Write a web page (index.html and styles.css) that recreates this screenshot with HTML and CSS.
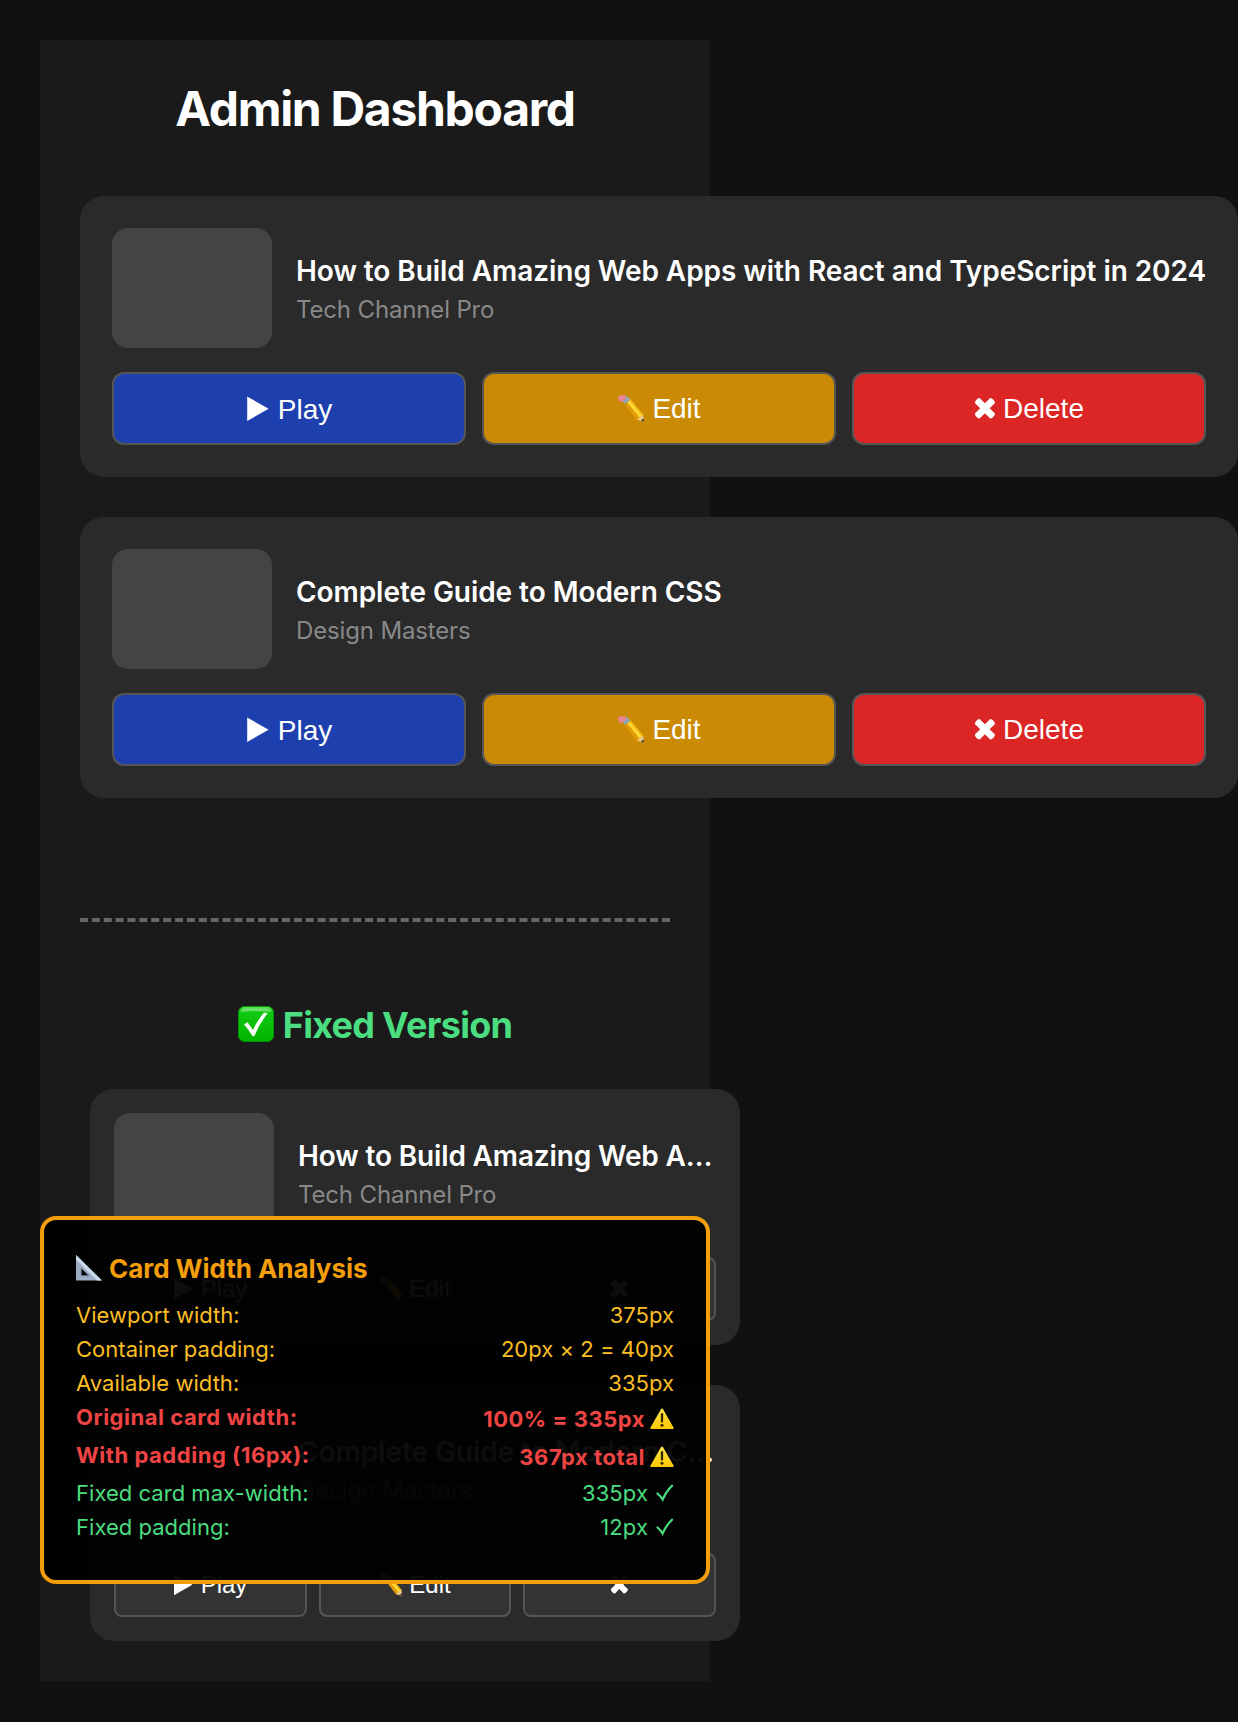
FILE: index.html
```html
<!DOCTYPE html>
<html lang="en">
<head>
<meta charset="utf-8">
<title>Admin Dashboard</title>
<link rel="stylesheet" href="styles.css">
</head>
<body>
<svg class="sprite" aria-hidden="true">
  <defs>
    <linearGradient id="g-check" x1="0" y1="0" x2="0" y2="1"><stop offset="0" stop-color="#5be35b"/><stop offset=".16" stop-color="#12c912"/><stop offset="1" stop-color="#00b400"/></linearGradient>
    <linearGradient id="g-warn" x1="0" y1="0" x2="0" y2="1"><stop offset="0" stop-color="#ffe352"/><stop offset="1" stop-color="#ffc800"/></linearGradient>
    <symbol id="play" viewBox="0 0 24 28"><path d="M1.2 1.5 22.6 13.7 1.2 26z" fill="#fff"/></symbol>
    <symbol id="pencil" viewBox="0 0 28 28">
      <path d="M6.6 6.9 12 2.4 26 19.2l.9 7.4-7.2-2.2z" fill="#f6bd16"/>
      <path d="M8.500 5.400 10.400 3.800 24.600 20.600l-2 1.800z" fill="#ffdc35"/>
      <path d="m6.600 6.900 2-1.600 14 17.100-2.900 2z" fill="#e39a0b"/>
      <path d="m19.700 24.400 3-2 1.900-1.800 1.400-1.400.9 7.400z" fill="#e9c58c"/>
      <path d="m24 25.700 2.600-2.400.3 3.300z" fill="#333"/>
      <path d="M4.300 4.500 9.300.2 13.200 4.700 8.100 9z" fill="#7f98a8"/>
      <path d="M5.900 6.300 11 2M7 7.700l5.200-4.300" stroke="#b8c7d0" stroke-width=".7"/>
      <path d="M5 7C2.600 7 .7 5 .9 3.100 1.200 1 3.300-.2 5.500.1 7.500.3 9 1 9.900 2.500z" fill="#ea8490"/>
    </symbol>
    <symbol id="cross" viewBox="0 0 22 22"><path d="M5.600 0 10.900 5.300 16.200 0Q20.200.8 21 5L15.600 10.300l5.400 5.300q-.8 4.200-4.800 5L10.900 15.300l-5.300 5.300q-4-.8-4.800-5L6.200 10.300.8 5Q1.600.8 5.600 0z" fill="#fff"/></symbol>
    <symbol id="check-box" viewBox="0 0 36 36"><rect x=".5" y=".5" width="35" height="35" rx="6" fill="url(#g-check)" stroke="#079407"/><path d="M3 6q0-3.500 4.500-3.500h21Q33 2.500 33 6q-15-2-30 0z" fill="#fff" opacity=".3"/><path d="M6 18.500 9.600 16.300 15 24Q19.500 14 26 6.800L29.800 7Q21 18 16.300 30.200h-1.700Q10.500 23.500 6 18.500z" fill="#fff"/></symbol>
    <symbol id="ruler" viewBox="0 0 26 26"><path d="M0 0 26 25.600H0zM5.200 13v7.600h7.600z" fill="#9cadc3" fill-rule="evenodd"/><path d="M0 0 26 25.600h-5L0 4.500z" fill="#cbd9e8"/><path d="M5.200 13v7.600h7.600z" fill="none" stroke="#61718a" stroke-width="1"/></symbol>
    <symbol id="warn" viewBox="0 0 24 22"><path d="M12 .4q.7 0 1.100.8L23.500 19.400q.7 1.600-.8 1.600H1.300q-1.500 0-.8-1.600L10.900 1.200Q11.300.4 12 .4z" fill="url(#g-warn)"/><path d="M12 6.200v7.400" stroke="#332a00" stroke-width="2.300" stroke-linecap="round"/><circle cx="12" cy="17.300" r="1.500" fill="#332a00"/></symbol>
    <symbol id="tick" viewBox="0 0 18 18"><path d="M1.500 9.500Q4.500 12 6.600 15.500 10 7.500 16 1.700" fill="none" stroke="#4ade80" stroke-width="2.200" stroke-linecap="round"/></symbol>
  </defs>
</svg>

<main class="phone">
  <h1 class="page-title">Admin Dashboard</h1>

  <section class="cards">
    <article class="card">
      <div class="card-head">
        <div class="thumb"></div>
        <div class="info"><div class="title">How to Build Amazing Web Apps with React and TypeScript in 2024</div><div class="channel">Tech Channel Pro</div></div>
      </div>
      <div class="actions">
        <button class="btn play"><svg class="i-play"><use href="#play"/></svg><span>Play</span></button>
        <button class="btn edit"><svg class="i-pencil"><use href="#pencil"/></svg><span>Edit</span></button>
        <button class="btn delete"><svg class="i-cross"><use href="#cross"/></svg><span>Delete</span></button>
      </div>
    </article>
    <article class="card">
      <div class="card-head">
        <div class="thumb"></div>
        <div class="info"><div class="title">Complete Guide to Modern CSS</div><div class="channel">Design Masters</div></div>
      </div>
      <div class="actions">
        <button class="btn play"><svg class="i-play"><use href="#play"/></svg><span>Play</span></button>
        <button class="btn edit"><svg class="i-pencil"><use href="#pencil"/></svg><span>Edit</span></button>
        <button class="btn delete"><svg class="i-cross"><use href="#cross"/></svg><span>Delete</span></button>
      </div>
    </article>
  </section>

  <div class="divider"></div>

  <h2 class="fixed-title"><svg class="i-check"><use href="#check-box"/></svg><span>Fixed Version</span></h2>

  <section class="cards fixed">
    <article class="card">
      <div class="card-head">
        <div class="thumb"></div>
        <div class="info"><div class="title">How to Build Amazing Web Apps with React and TypeScript in 2024</div><div class="channel">Tech Channel Pro</div></div>
      </div>
      <div class="actions">
        <button class="btn play"><svg class="i-play"><use href="#play"/></svg><span>Play</span></button>
        <button class="btn edit"><svg class="i-pencil"><use href="#pencil"/></svg><span>Edit</span></button>
        <button class="btn delete"><svg class="i-cross"><use href="#cross"/></svg></button>
      </div>
    </article>
    <article class="card">
      <div class="card-head">
        <div class="thumb"></div>
        <div class="info"><div class="title guide">Complete Guide to Modern CSS</div><div class="channel">Design Masters</div></div>
      </div>
      <div class="actions">
        <button class="btn play"><svg class="i-play"><use href="#play"/></svg><span>Play</span></button>
        <button class="btn edit"><svg class="i-pencil"><use href="#pencil"/></svg><span>Edit</span></button>
        <button class="btn delete"><svg class="i-cross"><use href="#cross"/></svg></button>
      </div>
    </article>
  </section>

  <aside class="analysis">
    <h3 class="analysis-title"><svg class="i-ruler"><use href="#ruler"/></svg><span>Card Width Analysis</span></h3>
    <div class="row"><span>Viewport width:</span><span>375px</span></div>
    <div class="row"><span>Container padding:</span><span>20px × 2 = 40px</span></div>
    <div class="row"><span>Available width:</span><span>335px</span></div>
    <div class="row bad"><span>Original card width:</span><span class="value">100% = 335px<svg class="i-warn"><use href="#warn"/></svg></span></div>
    <div class="row bad"><span>With padding (16px):</span><span class="value">367px total<svg class="i-warn"><use href="#warn"/></svg></span></div>
    <div class="row good"><span>Fixed card max-width:</span><span class="value">335px<svg class="i-tick"><use href="#tick"/></svg></span></div>
    <div class="row good"><span>Fixed padding:</span><span class="value">12px<svg class="i-tick"><use href="#tick"/></svg></span></div>
  </aside>
</main>
</body>
</html>
```
FILE: styles.css
```css
* { box-sizing: border-box; }
body {
  margin: 0;
  padding: 40px 0 41px 40px;
  background: #111;
  color: #fff;
  font-family: Inter, "Liberation Sans", sans-serif;
  overflow: hidden;
}
.sprite { position: absolute; width: 0; height: 0; }
svg { display: block; flex: none; overflow: visible; }
h1, h2, h3 { margin: 0; }
.phone {
  position: relative;
  width: 670px;
  padding: 40px;
  background: #1a1a1a;
}
.page-title {
  margin-bottom: 58px;
  font-size: 48px;
  font-weight: 700;
  letter-spacing: -1.3px;
  line-height: 58px;
  text-align: center;
  white-space: nowrap;
}
.cards { display: flex; flex-direction: column; gap: 40px; }
.card {
  width: 1158px;
  padding: 32px;
  border-radius: 24px;
  background: #2a2a2a;
}
.card-head { display: flex; align-items: center; gap: 24px; margin-bottom: 24px; }
.thumb { flex: none; width: 160px; height: 120px; border-radius: 16px; background: #444; }
.info { flex: 1; min-width: 0; }
.title {
  margin-bottom: 5px;
  font-size: 28px;
  font-weight: 600;
  letter-spacing: -.06px;
  line-height: 37px;
  white-space: nowrap;
}
.channel { color: #888; font-size: 24px; letter-spacing: -.15px; line-height: 29px; }
.actions { display: grid; grid-template-columns: repeat(3, 1fr); gap: 16px; }
.btn {
  display: flex;
  align-items: center;
  justify-content: center;
  gap: .25em;
  height: 73px;
  padding: 0;
  border: 2px solid #555;
  border-radius: 12px;
  background: #333;
  color: #fff;
  font: 28px/1.15 "Liberation Sans", Arial, sans-serif;
}
.btn span { padding-top: 1px; }
.play { gap: .285em; background: #1e40af; }
.play span { padding-top: 3px; }
.edit { background: #ca8a04; }
.delete { background: #dc2626; }
.i-play { width: .857em; height: 1em; }
.i-pencil { width: 1em; height: 1em; }
.i-cross { width: .786em; height: .786em; }
.divider { margin: 120px 0 80px; border-top: 4px dashed #666; }
.fixed-title {
  display: flex;
  align-items: center;
  justify-content: center;
  gap: 9px;
  margin-bottom: 40px;
  color: #4ade80;
  font-size: 36px;
  font-weight: 700;
  letter-spacing: -.72px;
  line-height: 47px;
  white-space: nowrap;
}
.i-check { width: 36px; height: 36px; margin-bottom: 3px; }
.fixed { padding-left: 10px; }
.fixed .card { width: 650px; padding: 24px; }
.fixed .title { overflow: hidden; letter-spacing: -.15px; text-overflow: ellipsis; }
.fixed .guide { letter-spacing: -.06px; }
.fixed .actions { gap: 12px; }
.fixed .btn { height: 64px; border-radius: 8px; background: #333; font-size: 24px; }
.fixed .btn span { padding-top: 0; }
.analysis {
  position: absolute;
  left: 0;
  top: 1176px;
  width: 670px;
  height: 368px;
  padding: 32px;
  border: 4px solid #f59e0b;
  border-radius: 16px;
  background: rgba(0, 0, 0, .95);
  color: #fbbf24;
  font-size: 22px;
  letter-spacing: .03px;
}
.analysis-title {
  display: flex;
  gap: 7px;
  height: 46px;
  color: #f59e0b;
  font-size: 26px;
  letter-spacing: -.05px;
  line-height: 34px;
}
.i-ruler { width: 26px; height: 26px; margin-top: 3px; }
.row { display: flex; justify-content: space-between; line-height: 34px; white-space: nowrap; }
.value { display: flex; align-items: center; gap: 5px; }
.bad { color: #ef4444; font-weight: 700; letter-spacing: .53px; }
.bad .value { line-height: 38px; }
.good { color: #4ade80; }
.good .value { gap: 8px; letter-spacing: .1px; }
.i-warn { width: 24px; height: 22px; }
.i-tick { width: 18px; height: 18px; }
```
